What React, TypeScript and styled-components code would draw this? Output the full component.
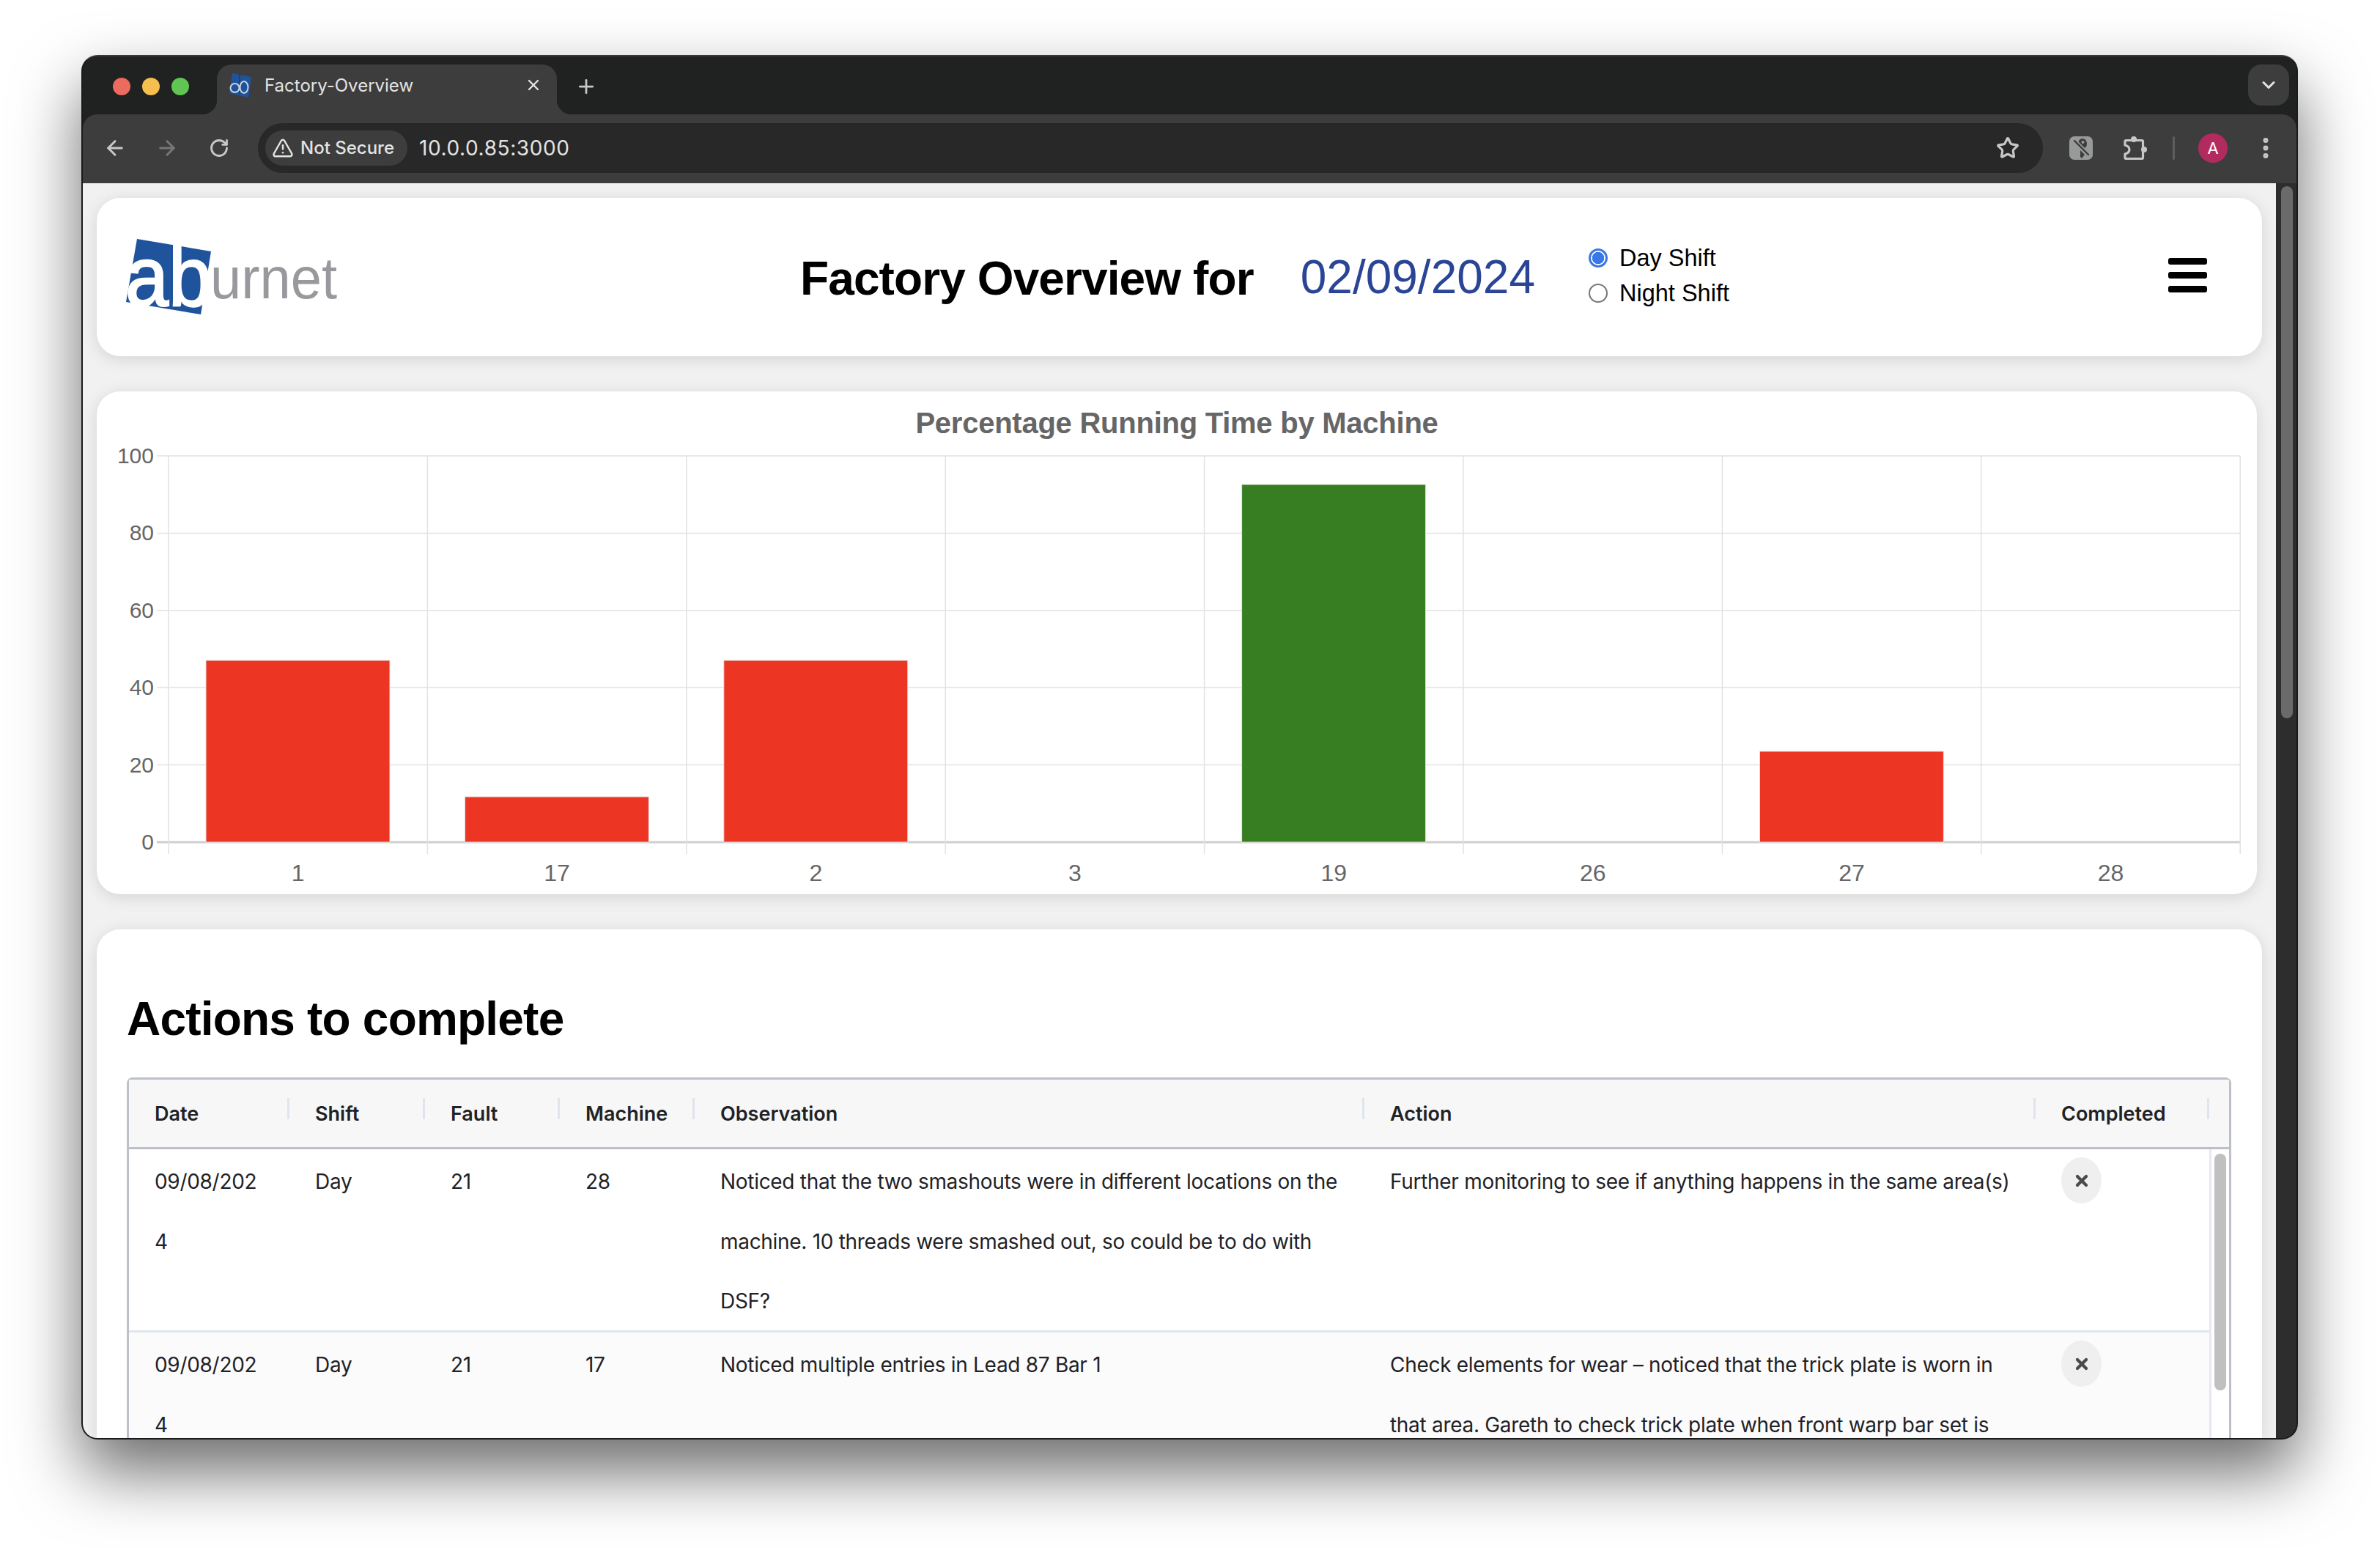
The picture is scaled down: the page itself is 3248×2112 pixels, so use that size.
import React from 'react'
import styled, { createGlobalStyle } from 'styled-components'
import { ArrowLeft, ArrowRight, ChevronDown, EllipsisVertical, Plus, RotateCw, Star, TriangleAlert, X } from 'lucide-react'

const GlobalStyle = createGlobalStyle`
	html, body {
		margin: 0;
		padding: 0;
		background: #fff;
	}
	* {
		box-sizing: border-box;
	}
`

const columns = [219, 185, 184, 184, 914, 916, 237]
const headers = ['Date', 'Shift', 'Fault', 'Machine', 'Observation', 'Action', 'Completed']

const rows = [
	{
		date: '09/08/2024',
		shift: 'Day',
		fault: '21',
		machine: '28',
		observation: 'Noticed that the two smashouts were in different locations on the machine. 10 threads were smashed out, so could be to do with DSF?',
		action: 'Further monitoring to see if anything happens in the same area(s)',
	},
	{
		date: '09/08/2024',
		shift: 'Day',
		fault: '21',
		machine: '17',
		observation: 'Noticed multiple entries in Lead 87 Bar 1',
		action: 'Check elements for wear – noticed that the trick plate is worn in that area. Gareth to check trick plate when front warp bar set is',
	},
]

const bars = [
	{ label: '1', value: 47.06, color: '#ed3524' },
	{ label: '17', value: 11.76, color: '#ed3524' },
	{ label: '2', value: 47.06, color: '#ed3524' },
	{ label: '3', value: 0, color: '#ed3524' },
	{ label: '19', value: 92.6, color: '#377e22' },
	{ label: '26', value: 0, color: '#ed3524' },
	{ label: '27', value: 23.53, color: '#ed3524' },
	{ label: '28', value: 0, color: '#ed3524' },
]

function BurnetLogo() {
	return (
		<svg width='300' height='132' viewBox='0 -10 300 132'>
			<polygon points='17,4 118,21 104,107 2,90' fill='#1f539c' />
			<text x='1' y='95' fontFamily='Liberation Sans' fontSize='115' fill='#fff' stroke='#fff' strokeWidth='2.4' textLength='118' lengthAdjust='spacingAndGlyphs'>ab</text>
			<text x='117' y='85' fontFamily='Liberation Sans' fontSize='79' fill='#98999c' textLength='173' lengthAdjust='spacingAndGlyphs'>urnet</text>
		</svg>
	)
}

function Favicon() {
	return (
		<svg width='32' height='33' viewBox='0 0 32 33'>
			<polygon points='5,0 31,5 27,33 1,27' fill='#1f539c' />
			<rect x='14' y='0' width='2' height='28' fill='#3d3d3d' />
			<ellipse cx='8.5' cy='20' rx='6' ry='6' fill='#1f539c' stroke='#c9d3e4' strokeWidth='2' />
			<ellipse cx='21' cy='19' rx='5.5' ry='8' fill='#1f539c' stroke='#c9d3e4' strokeWidth='2' />
		</svg>
	)
}

function ShieldExtension() {
	return (
		<svg width='32' height='32' viewBox='0 0 32 32'>
			<rect width='32' height='32' rx='7' fill='#989a9a' />
			<ellipse cx='18' cy='10' rx='6' ry='7' fill='#3c3c3c' />
			<circle cx='18.5' cy='8' r='2' fill='#989a9a' />
			<polygon points='15,19 21,25 17,30 15,28' fill='#3c3c3c' />
			<line x1='5' y1='4' x2='28' y2='27' stroke='#989a9a' strokeWidth='6' />
			<line x1='7' y1='6' x2='26' y2='25' stroke='#3c3c3c' strokeWidth='2.4' strokeLinecap='round' />
		</svg>
	)
}

function PuzzlePiece() {
	return (
		<svg width='34' height='34' viewBox='0 0 34 34' fill='none'>
			<path
				d='M4.5 6.5H26a1.5 1.5 0 0 1 1.5 1.5V30a1.5 1.5 0 0 1-1.5 1.5H4.5A1.5 1.5 0 0 1 3 30V25c4-1 6-3 6-6s-2-5-6-6V8a1.5 1.5 0 0 1 1.5-1.5Z'
				stroke='#c7c7c7'
				strokeWidth='3.2'
				strokeLinejoin='round'
			/>
			<circle cx='15' cy='5' r='4' fill='#c7c7c7' />
			<circle cx='29' cy='19' r='4' fill='#c7c7c7' />
		</svg>
	)
}

function Chart() {
	const left = 230 - 132
	const top = 622 - 534
	const slot = 353.4
	const plotHeight = 527
	const plotWidth = slot * 8
	return (
		<ChartSvg width='2948' height='686' viewBox='0 0 2948 686'>
			<text x='1474' y='57' textAnchor='middle' fontFamily='Liberation Sans' fontSize='40' fontWeight='700' letterSpacing='-0.25' fill='#666'>
				Percentage Running Time by Machine
			</text>
			{[0, 20, 40, 60, 80, 100].map(tick => {
				const y = top + plotHeight - (tick / 100) * plotHeight
				return (
					<g key={tick}>
						<line x1={left - 16} x2={left + plotWidth} y1={y} y2={y} stroke={tick === 0 ? '#cfcfcf' : '#e2e2e2'} strokeWidth={tick === 0 ? 3 : 1.5} />
						<text x={left - 20} y={y + 10} textAnchor='end' fontFamily='Liberation Sans' fontSize='30' fill='#666'>{tick}</text>
					</g>
				)
			})}
			{bars.map((_, i) => (
				<line key={i} x1={left + i * slot} x2={left + i * slot} y1={top} y2={top + plotHeight + 16} stroke='#e2e2e2' strokeWidth='1.5' />
			))}
			<line x1={left + plotWidth} x2={left + plotWidth} y1={top} y2={top + plotHeight + 16} stroke='#e2e2e2' strokeWidth='1.5' />
			{bars.map((bar, i) => {
				const height = (bar.value / 100) * plotHeight
				return (
					<g key={bar.label}>
						{bar.value > 0 && <rect x={left + i * slot + 51} y={top + plotHeight - height} width='251' height={height} fill={bar.color} stroke='#e9e3e1' strokeWidth='1' />}
						<text x={left + i * slot + slot / 2} y={top + plotHeight + 53} textAnchor='middle' fontFamily='Liberation Sans' fontSize='32' fill='#666'>{bar.label}</text>
					</g>
				)
			})}
		</ChartSvg>
	)
}

export default function App() {
	return (
		<Backdrop>
			<GlobalStyle />
			<Window>
				<TabStrip>
					<TrafficLights>
						<Light $color='#ed6a5e' />
						<Light $color='#f5bf4f' />
						<Light $color='#61c554' />
					</TrafficLights>
					<ActiveTab>
						<Favicon />
						<TabTitle>Factory-Overview</TabTitle>
						<X size={24} color='#e3e3e3' strokeWidth={2.4} />
					</ActiveTab>
					<NewTab>
						<Plus size={30} color='#c7c7c7' strokeWidth={2.2} />
					</NewTab>
					<TabSearch>
						<ChevronDown size={28} color='#e3e3e3' strokeWidth={2.6} />
					</TabSearch>
				</TabStrip>
				<Toolbar>
					<NavIcon>
						<ArrowLeft size={32} color='#c7c7c7' strokeWidth={2.2} />
					</NavIcon>
					<NavIcon>
						<ArrowRight size={32} color='#777' strokeWidth={2.2} />
					</NavIcon>
					<NavIcon>
						<RotateCw size={28} color='#c7c7c7' strokeWidth={2.4} />
					</NavIcon>
					<AddressBar>
						<SecurityChip>
							<TriangleAlert size={30} color='#e3e3e3' strokeWidth={2} />
							Not Secure
						</SecurityChip>
						<Url>10.0.0.85:3000</Url>
						<Star size={32} color='#c7c7c7' strokeWidth={2.4} />
					</AddressBar>
					<ToolbarActions>
						<ShieldExtension />
						<PuzzlePiece />
						<ToolbarDivider />
						<Avatar>A</Avatar>
						<EllipsisVertical size={36} color='#c7c7c7' strokeWidth={2.6} />
					</ToolbarActions>
				</Toolbar>
				<Viewport>
					<Page>
						<HeaderCard>
							<BurnetLogo />
							<TitleGroup>
								<PageTitle>Factory Overview for</PageTitle>
								<PageDate>02/09/2024</PageDate>
								<ShiftGroup>
									<ShiftOption>
										<RadioDot $checked />
										Day Shift
									</ShiftOption>
									<ShiftOption>
										<RadioDot />
										Night Shift
									</ShiftOption>
								</ShiftGroup>
							</TitleGroup>
							<Hamburger>
								<HamburgerBar />
								<HamburgerBar />
								<HamburgerBar />
							</Hamburger>
						</HeaderCard>
						<ChartCard>
							<Chart />
						</ChartCard>
						<ActionsCard>
							<ActionsTitle>Actions to complete</ActionsTitle>
							<Table>
								<HeaderRow>
									{headers.map((header, i) => (
										<HeaderCell key={header} $width={columns[i]}>
											{header}
											<Separator />
										</HeaderCell>
									))}
								</HeaderRow>
								<TableBody>
									<RowList>
										{rows.map((row, index) => (
											<Row key={index} $alt={index % 2 === 1}>
												<Cell $width={columns[0]}>{row.date}</Cell>
												<Cell $width={columns[1]}>{row.shift}</Cell>
												<Cell $width={columns[2]}>{row.fault}</Cell>
												<Cell $width={columns[3]}>{row.machine}</Cell>
												<Cell $width={columns[4]}>{row.observation}</Cell>
												<Cell $width={columns[5]}>{row.action}</Cell>
												<Cell $width={columns[6]}>
													<CloseChip>
														<X size={24} color='#4a4a4a' strokeWidth={4.2} />
													</CloseChip>
												</Cell>
											</Row>
										))}
									</RowList>
									<TableScroll>
										<TableThumb />
									</TableScroll>
								</TableBody>
							</Table>
						</ActionsCard>
					</Page>
					<PageScroll>
						<PageThumb />
					</PageScroll>
				</Viewport>
			</Window>
		</Backdrop>
	)
}

const Backdrop = styled.div`
	width: 3248px;
	height: 2112px;
	padding: 75px 112px 148px 111px;
	background: #fff;
	overflow: hidden;
`
const Window = styled.div`
	display: flex;
	flex-direction: column;
	height: 100%;
	border: 2px solid #1a1a1a;
	border-top-color: #3a3a3a;
	border-radius: 22px;
	overflow: hidden;
	background: #202221;
	box-shadow: 0 44px 90px rgba(0, 0, 0, 0.58);
`
const TabStrip = styled.div`
	display: flex;
	align-items: flex-end;
	height: 79px;
	padding-right: 10px;
	background: #202221;
`
const TrafficLights = styled.div`
	display: flex;
	gap: 16px;
	align-self: flex-start;
	padding: 29px 0 0 41px;
	width: 183px;
`
const Light = styled.span<{ $color: string }>`
	width: 24px;
	height: 24px;
	border-radius: 50%;
	background: ${p => p.$color};
`
const ActiveTab = styled.div`
	position: relative;
	display: flex;
	align-items: flex-start;
	gap: 17px;
	width: 464px;
	height: 68px;
	padding: 12px 20px 0 16px;
	background: #3d3d3d;
	border-radius: 20px 20px 0 0;

	&::before,
	&::after {
		content: '';
		position: absolute;
		bottom: 0;
		width: 20px;
		height: 20px;
	}
	&::before {
		left: -20px;
		background: radial-gradient(circle at 0 0, #202221 20px, #3d3d3d 20.5px);
	}
	&::after {
		right: -20px;
		background: radial-gradient(circle at 100% 0, #202221 20px, #3d3d3d 20.5px);
	}

	svg:last-child {
		margin-top: 4px;
	}
`
const TabTitle = styled.span`
	flex: 1;
	margin-top: 3px;
	font: 400 24px/28px 'Inter', sans-serif;
	color: #e3e3e3;
`
const NewTab = styled.div`
	align-self: flex-start;
	padding: 26px 0 0 25px;
	flex: 1;
`
const TabSearch = styled.div`
	display: flex;
	align-items: center;
	justify-content: center;
	align-self: flex-start;
	margin-top: 11px;
	width: 56px;
	height: 56px;
	border-radius: 18px;
	background: #3d3d3d;
`
const Toolbar = styled.div`
	display: flex;
	align-items: center;
	height: 94px;
	padding: 0 10px 2px 17px;
	background: #3d3d3d;
	border-radius: 20px 20px 0 0;
`
const NavIcon = styled.div`
	display: flex;
	justify-content: center;
	width: 71px;
	&:first-child {
		margin-left: -9px;
	}
`
const AddressBar = styled.div`
	display: flex;
	align-items: center;
	flex: 0 0 2436px;
	height: 68px;
	margin-left: 18px;
	padding: 0 32px 0 10px;
	border-radius: 34px;
	background: #282828;

	svg:last-child {
		margin-left: auto;
	}
`
const SecurityChip = styled.div`
	display: flex;
	align-items: center;
	gap: 9px;
	height: 48px;
	padding: 0 18px 0 9px;
	border-radius: 24px;
	background: #3d3d3d;
	font: 500 24px/1 'Inter', sans-serif;
	color: #e3e3e3;
`
const Url = styled.span`
	margin-left: 16px;
	font: 400 28px/1 'Inter', sans-serif;
	letter-spacing: 0.6px;
	color: #e3e3e3;
`
const ToolbarActions = styled.div`
	display: flex;
	align-items: center;
	flex: 1;
	padding-left: 36px;

	& > svg:nth-child(2) {
		margin-left: 41px;
	}
	& > svg:last-child {
		margin-left: 34px;
	}
`
const ToolbarDivider = styled.span`
	width: 3px;
	height: 32px;
	margin-left: 34px;
	border-radius: 2px;
	background: #5e5e5e;
`
const Avatar = styled.span`
	display: flex;
	align-items: center;
	justify-content: center;
	width: 40px;
	height: 40px;
	margin-left: 32px;
	border-radius: 50%;
	background: #b32b5e;
	font: 400 22px/1 'Inter', sans-serif;
	color: #fff;
`
const Viewport = styled.div`
	display: flex;
	flex: 1;
	min-height: 0;
	background: #2d2d2d;
`
const Page = styled.div`
	display: flex;
	flex-direction: column;
	width: 2993px;
	padding: 20px 19px 0 19px;
	background: #f1f1f1;
	overflow: hidden;
`
const Card = styled.div`
	background: #fff;
	border-radius: 32px;
	box-shadow: 0 4px 22px rgba(0, 0, 0, 0.12);
	flex-shrink: 0;
`
const HeaderCard = styled(Card)`
	position: relative;
	display: flex;
	align-items: center;
	height: 216px;
	padding: 0 75px 0 38px;
`
const TitleGroup = styled.div`
	display: flex;
	align-items: center;
	margin-left: 622px;
`
const PageTitle = styled.h1`
	margin: 4px 0 0;
	font: 700 64px/1 'Liberation Sans', sans-serif;
	letter-spacing: -0.9px;
	color: #000;
`
const PageDate = styled.div`
	margin-left: 64px;
	font: 400 64px/1 'Liberation Sans', sans-serif;
	color: #2b4596;
`
const ShiftGroup = styled.div`
	display: flex;
	flex-direction: column;
	margin: 0 0 4px 73px;
`
const ShiftOption = styled.label`
	display: flex;
	align-items: center;
	gap: 16px;
	height: 48px;
	font: 400 32.5px/48px 'Liberation Sans', sans-serif;
	color: #000;
`
const RadioDot = styled.span<{ $checked?: boolean }>`
	display: block;
	width: 26px;
	height: 26px;
	border-radius: 50%;
	border: ${p => (p.$checked ? '3px solid #3b78e7' : '2px solid #767676')};
	background: ${p => (p.$checked ? 'radial-gradient(circle, #3b78e7 8px, #fff 8.5px)' : '#fff')};
`
const Hamburger = styled.div`
	display: flex;
	flex-direction: column;
	gap: 10px;
	margin: 0 0 6px auto;
`
const HamburgerBar = styled.span`
	display: block;
	width: 53px;
	height: 9px;
	border-radius: 3px;
	background: #000;
`
const ChartCard = styled(Card)`
	width: 2948px;
	height: 686px;
	margin-top: 48px;
`
const ChartSvg = styled.svg`
	display: block;
`
const ActionsCard = styled(Card)`
	flex: 1;
	margin-top: 48px;
	padding: 90px 38px 0 41px;
	border-radius: 32px 32px 0 0;
	overflow: hidden;
`
const ActionsTitle = styled.h2`
	margin: 0;
	font: 700 64px/1 'Liberation Sans', sans-serif;
	letter-spacing: -0.8px;
	color: #000;
`
const Table = styled.div`
	margin-top: 48px;
	width: 2872px;
	border: 3px solid #bcc1c7;
	border-bottom: 0;
	border-radius: 8px 8px 0 0;
	font-family: 'Inter', sans-serif;
	color: #1f2226;
`
const HeaderRow = styled.div`
	display: flex;
	align-items: center;
	height: 95px;
	background: #f7f7f7;
	border-bottom: 3px solid #bcc1c7;
`
const HeaderCell = styled.div<{ $width: number }>`
	position: relative;
	flex: 0 0 ${p => p.$width}px;
	padding-left: 35px;
	font-size: 27px;
	font-weight: 600;
	line-height: 95px;
`
const Separator = styled.span`
	position: absolute;
	top: 26px;
	right: 0;
	width: 3px;
	height: 29px;
	background: #dfe4ee;
`
const TableBody = styled.div`
	display: flex;
	height: 400px;
`
const RowList = styled.div`
	flex: 0 0 2839px;
`
const Row = styled.div<{ $alt: boolean }>`
	display: flex;
	height: 250px;
	border-bottom: 3px solid #dfe4ee;
	background: ${p => (p.$alt ? '#fbfbfb' : '#fff')};
`
const Cell = styled.div<{ $width: number }>`
	flex: 0 0 ${p => p.$width}px;
	padding: 4px 24px 0 35px;
	font-size: 28px;
	letter-spacing: -0.3px;
	line-height: 81.6px;
	overflow-wrap: anywhere;

	&:first-child {
		padding-right: 36px;
	}
`
const CloseChip = styled.span`
	display: flex;
	align-items: center;
	justify-content: center;
	width: 55px;
	height: 63px;
	margin-top: 7px;
	border-radius: 50%;
	background: #efefef;
`
const TableScroll = styled.div`
	flex: 1;
	border-left: 3px solid #e6e9ef;
	padding: 6px 4px 0 4px;
	background: #fff;
`
const TableThumb = styled.div`
	height: 323px;
	border-radius: 8px;
	background: #c0c0c0;
`
const PageScroll = styled.div`
	flex: 1;
	padding: 4px 5px 0 7px;
`
const PageThumb = styled.div`
	height: 726px;
	border-radius: 8px;
	background: #6a6a6a;
`
